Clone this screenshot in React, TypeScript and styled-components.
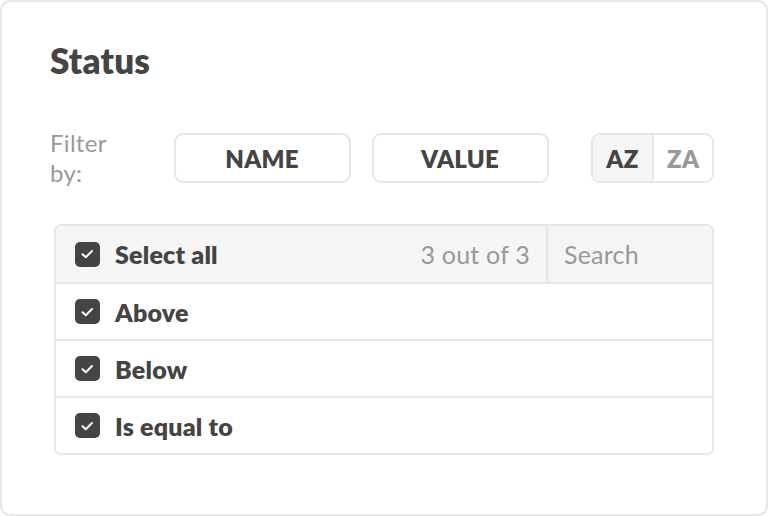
import React from "react";
import styled, { createGlobalStyle } from "styled-components";

const Global = createGlobalStyle`
  html, body { margin: 0; padding: 0; background: #ffffff; }
  body { font-family: Lato, "Open Sans", sans-serif; color: #444444; }
  * { box-sizing: border-box; }
`;

const Card = styled.div`
  width: 768px;
  height: 516px;
  border: 2px solid #e6e6e6;
  border-radius: 10px;
  background: #ffffff;
  padding: 38px 52px 0 48px;
  display: flex;
  flex-direction: column;
`;

const Title = styled.h1`
  margin: 0;
  font-size: 35px;
  font-weight: 800;
  line-height: 40px;
  color: #444444;
  letter-spacing: 0.2px;
`;

const FilterRow = styled.div`
  display: flex;
  align-items: center;
  margin-top: 48px;
`;

const FilterLabel = styled.div`
  width: 90px;
  margin-right: 34px;
  font-size: 24px;
  line-height: 30px;
  color: #999999;
  letter-spacing: 0.3px;
`;

const FieldButton = styled.button`
  width: 178px;
  height: 50px;
  margin-right: ${(p: { $gap: number }) => p.$gap}px;
  border: 2px solid #e6e6e6;
  border-radius: 9px;
  background: #ffffff;
  font-family: inherit;
  font-size: 24px;
  font-weight: 800;
  color: #444444;
  letter-spacing: 0.3px;
  padding: 0;
`;

const SortGroup = styled.div`
  display: flex;
  height: 50px;
  border: 2px solid #e6e6e6;
  border-radius: 9px;
  overflow: hidden;
`;

const SortButton = styled.button<{ $active: boolean }>`
  width: 60px;
  height: 100%;
  border: none;
  padding: 0;
  background: ${(p) => (p.$active ? "#f5f5f5" : "#ffffff")};
  color: ${(p) => (p.$active ? "#444444" : "#999999")};
  font-family: inherit;
  font-size: 24px;
  font-weight: 800;
  letter-spacing: 0.3px;
  & + & { border-left: 2px solid #e6e6e6; }
`;

const Table = styled.div`
  margin: 36px 0 0 4px;
  border: 2px solid #e6e6e6;
  border-radius: 7px;
  overflow: hidden;
`;

const Row = styled.div<{ $header?: boolean }>`
  display: flex;
  align-items: center;
  height: ${(p) => (p.$header ? 56 : 57)}px;
  background: ${(p) => (p.$header ? "#f5f5f5" : "#ffffff")};
  padding-left: 19px;
  & + & { border-top: 2px solid #e6e6e6; }
`;

const Box = styled.span`
  width: 25px;
  height: 25px;
  border-radius: 5px;
  background: #444444;
  display: flex;
  align-items: center;
  justify-content: center;
  flex: none;
`;

const Label = styled.span`
  margin-left: 15px;
  font-size: 25px;
  font-weight: 800;
  color: #444444;
  letter-spacing: 0.2px;
  flex: 1;
`;

const Count = styled.span`
  font-size: 25px;
  color: #999999;
  padding-right: 16px;
  letter-spacing: 0.2px;
`;

const Search = styled.div`
  align-self: stretch;
  width: 166px;
  border-left: 2px solid #e6e6e6;
  display: flex;
  align-items: center;
  padding-left: 16px;
  font-size: 25px;
  color: #999999;
  letter-spacing: 0.2px;
`;

const Check = () => (
  <Box>
    <svg width="13" height="10" viewBox="0 0 13 10" fill="none">
      <path d="M1.5 5.2 L4.8 8.2 L11 2" stroke="#ffffff" strokeWidth="2" strokeLinecap="round" strokeLinejoin="round" />
    </svg>
  </Box>
);

const items = ["Above", "Below", "Is equal to"];

export default function App() {
  return (
    <>
      <Global />
      <Card>
        <Title>Status</Title>
        <FilterRow>
          <FilterLabel>Filter by:</FilterLabel>
          <FieldButton $gap={21}>NAME</FieldButton>
          <FieldButton $gap={42}>VALUE</FieldButton>
          <SortGroup>
            <SortButton $active>AZ</SortButton>
            <SortButton $active={false}>ZA</SortButton>
          </SortGroup>
        </FilterRow>
        <Table>
          <Row $header>
            <Check />
            <Label>Select all</Label>
            <Count>3 out of 3</Count>
            <Search>Search</Search>
          </Row>
          {items.map((t) => (
            <Row key={t}>
              <Check />
              <Label>{t}</Label>
            </Row>
          ))}
        </Table>
      </Card>
    </>
  );
}
